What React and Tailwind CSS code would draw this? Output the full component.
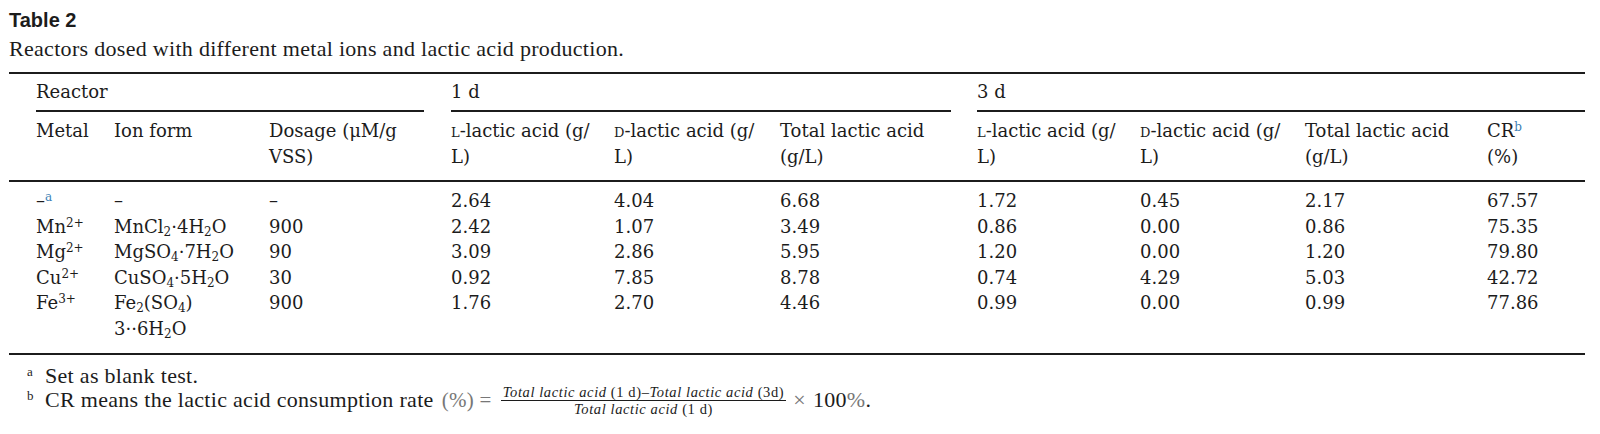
import React from 'react';

const cols = 'grid grid-cols-[27px_78px_155px_182px_163px_166px_197px_163px_165px_182px_98px]';

const Sc = ({ children }) => (
  <span className="[font-variant-caps:small-caps]">{children}</span>
);

const Sup = ({ children, blue }) => (
  <sup className={`text-[12px] ${blue ? 'text-[#3d7fb5]' : ''}`}>{children}</sup>
);

const Sub = ({ children }) => <sub className="text-[12px]">{children}</sub>;

const rows = [
  {
    metal: <>–<Sup blue>a</Sup></>,
    ion: '–',
    dose: '–',
    vals: ['2.64', '4.04', '6.68', '1.72', '0.45', '2.17', '67.57'],
  },
  {
    metal: <>Mn<Sup>2+</Sup></>,
    ion: <>MnCl<Sub>2</Sub>·4H<Sub>2</Sub>O</>,
    dose: '900',
    vals: ['2.42', '1.07', '3.49', '0.86', '0.00', '0.86', '75.35'],
  },
  {
    metal: <>Mg<Sup>2+</Sup></>,
    ion: <>MgSO<Sub>4</Sub>·7H<Sub>2</Sub>O</>,
    dose: '90',
    vals: ['3.09', '2.86', '5.95', '1.20', '0.00', '1.20', '79.80'],
  },
  {
    metal: <>Cu<Sup>2+</Sup></>,
    ion: <>CuSO<Sub>4</Sub>·5H<Sub>2</Sub>O</>,
    dose: '30',
    vals: ['0.92', '7.85', '8.78', '0.74', '4.29', '5.03', '42.72'],
  },
  {
    metal: <>Fe<Sup>3+</Sup></>,
    ion: <>Fe<Sub>2</Sub>(SO<Sub>4</Sub>)<br />3··6H<Sub>2</Sub>O</>,
    dose: '900',
    vals: ['1.76', '2.70', '4.46', '0.99', '0.00', '0.99', '77.86'],
  },
];

const App = () => {
  return (
    <div className="w-[1600px] h-[434px] bg-white text-[#1c1c1c] overflow-hidden">
      <div className="pt-[8px] pl-[9px]">
        <h1 className="font-['Liberation_Sans',sans-serif] font-bold text-[20px] leading-[24px]">
          Table 2
        </h1>
        <p className="mt-[4px] font-['Liberation_Serif',serif] text-[22px] leading-[26px] tracking-[0.3px]">
          Reactors dosed with different metal ions and lactic acid production.
        </p>
      </div>

      <div className="mt-[10px] ml-[9px] w-[1576px] font-['DejaVu_Serif',serif] text-[18px] border-t-2 border-[#1c1c1c]">
        {/* spanner row */}
        <div className={cols}>
          <div className="col-start-2 col-span-3 mr-[27px] py-[5px] leading-[26px] border-b-2 border-[#1c1c1c]">
            Reactor
          </div>
          <div className="col-span-3 mr-[26px] py-[5px] leading-[26px] border-b-2 border-[#1c1c1c]">
            1 d
          </div>
          <div className="col-span-4 py-[5px] leading-[26px] border-b-2 border-[#1c1c1c]">
            3 d
          </div>
        </div>

        {/* column headers */}
        <div className={`${cols} pt-[6px] pb-[10px] leading-[26px] border-b-2 border-[#1c1c1c]`}>
          <div />
          <div>Metal</div>
          <div>Ion form</div>
          <div>Dosage (μM/g<br />VSS)</div>
          <div><Sc>l</Sc>-lactic acid (g/<br />L)</div>
          <div><Sc>d</Sc>-lactic acid (g/<br />L)</div>
          <div>Total lactic acid<br />(g/L)</div>
          <div><Sc>l</Sc>-lactic acid (g/<br />L)</div>
          <div><Sc>d</Sc>-lactic acid (g/<br />L)</div>
          <div>Total lactic acid<br />(g/L)</div>
          <div>CR<Sup blue>b</Sup><br />(%)</div>
        </div>

        {/* body */}
        <div className="pt-[6px] pb-[12px] leading-[25.5px] border-b-2 border-[#1c1c1c]">
          {rows.map((r, i) => (
            <div key={i} className={cols}>
              <div />
              <div>{r.metal}</div>
              <div>{r.ion}</div>
              <div>{r.dose}</div>
              {r.vals.map((v, j) => (
                <div key={j}>{v}</div>
              ))}
            </div>
          ))}
        </div>
      </div>

      {/* footnotes */}
      <div className="mt-[9px] font-['Liberation_Serif',serif] text-[22px] leading-[24px] tracking-[0.3px]">
        <div className="flex pl-[27px]">
          <span className="w-[18px] text-[13px] leading-[16px]">a</span>
          <span>Set as blank test.</span>
        </div>
        <div className="flex items-center h-[24px] pl-[27px]">
          <span className="w-[18px] text-[13px] leading-[16px] self-start">b</span>
          <span>CR means the lactic acid consumption rate</span>
          <span className="ml-[8px] text-[#777] text-[21px]">(%) =</span>
          <span className="ml-[9px] inline-flex flex-col items-center italic text-[14.5px] leading-[16px] tracking-[0.6px]">
            <span className="px-[2px] border-b border-[#1c1c1c]">
              Total lactic acid <span className="not-italic">(1 d)</span>–Total lactic acid <span className="not-italic">(3d)</span>
            </span>
            <span>Total lactic acid <span className="not-italic">(1 d)</span></span>
          </span>
          <span className="ml-[7px] text-[#777]">×</span>
          <span className="ml-[7px]">100<span className="text-[#777]">%</span>.</span>
        </div>
      </div>
    </div>
  );
};

export default App;
